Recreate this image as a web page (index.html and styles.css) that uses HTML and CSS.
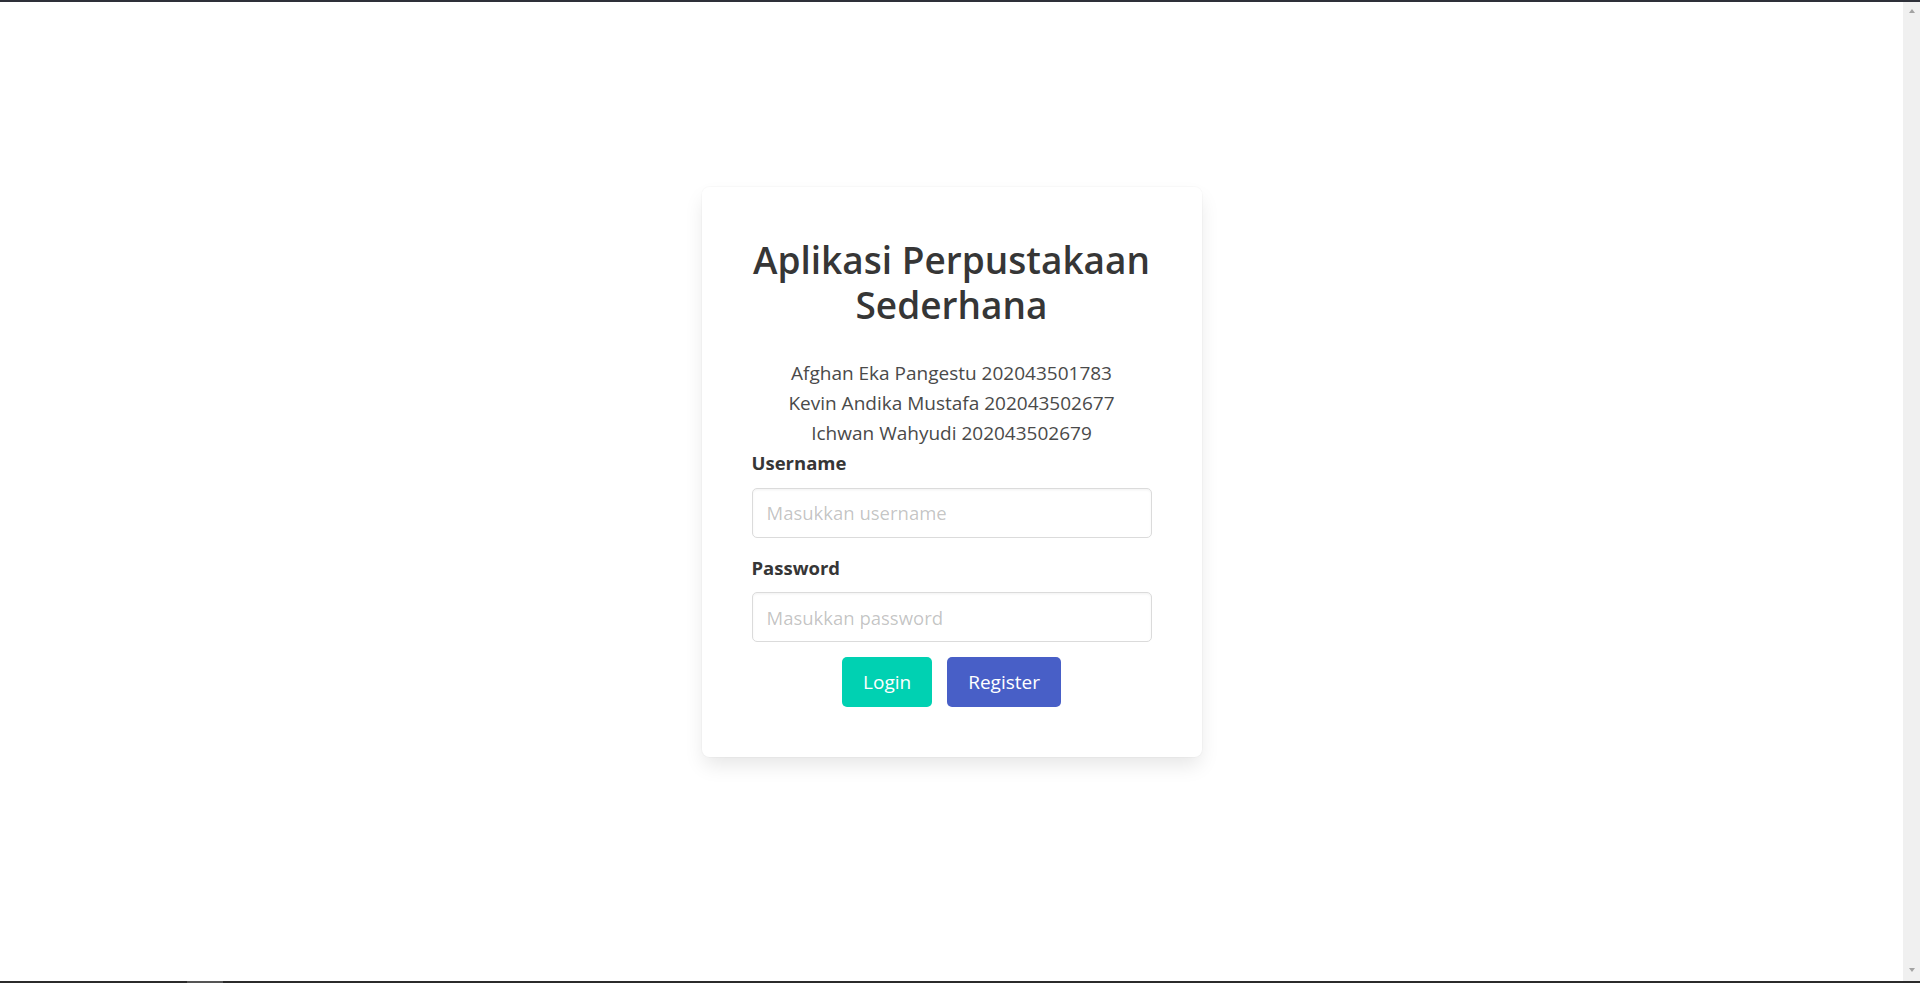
FILE: index.html
```html
<!DOCTYPE html>
<html lang="id">
<head>
<meta charset="utf-8">
<title>Aplikasi Perpustakaan Sederhana</title>
<link rel="stylesheet" href="styles.css">
</head>
<body>
<div class="screen">
  <div class="topbar"></div>
  <div class="viewport">
    <main class="page">
      <div class="box">
        <h1 class="title">Aplikasi Perpustakaan Sederhana</h1>
        <div class="members">
          <p>Afghan Eka Pangestu 202043501783</p>
          <p>Kevin Andika Mustafa 202043502677</p>
          <p>Ichwan Wahyudi 202043502679</p>
        </div>
        <form class="form">
          <div class="field">
            <label class="label" for="username">Username</label>
            <input class="input" id="username" type="text" placeholder="Masukkan username">
          </div>
          <div class="field">
            <label class="label" for="password">Password</label>
            <input class="input" id="password" type="password" placeholder="Masukkan password">
          </div>
          <div class="buttons">
            <button type="button" class="button is-primary">Login</button>
            <button type="button" class="button is-link">Register</button>
          </div>
        </form>
      </div>
    </main>
    <div class="scrollbar">
      <span class="arrow arrow-up"></span>
      <span class="arrow arrow-down"></span>
    </div>
  </div>
  <div class="bottombar"><span class="bottom-thumb"></span></div>
</div>
</body>
</html>
```

FILE: styles.css
```css
* { box-sizing: border-box; }
html, body { margin: 0; padding: 0; }
body {
  font-family: "Open Sans", "Noto Sans", sans-serif;
  color: #4a4a4a;
  background: #ffffff;
  overflow: hidden;
}
.screen {
  width: 1920px;
  height: 983px;
  display: flex;
  flex-direction: column;
}
.topbar {
  height: 2px;
  background: #2e3039;
  flex: none;
}
.bottombar {
  height: 2px;
  background: #2b2b2b;
  flex: none;
  padding-left: 187px;
  display: flex;
}
.bottom-thumb {
  width: 36px;
  height: 2px;
  background: #555555;
}
.viewport {
  flex: 1;
  display: flex;
  min-height: 0;
}
.page {
  flex: 1;
  display: flex;
  justify-content: center;
  align-items: flex-start;
  padding-top: 185px;
}
.scrollbar {
  width: 17px;
  flex: none;
  background: #f0f0f0;
  display: flex;
  flex-direction: column;
  justify-content: space-between;
  align-items: center;
  padding: 7px 0 9px;
}
.arrow {
  width: 0;
  height: 0;
  border-left: 3.5px solid transparent;
  border-right: 3.5px solid transparent;
}
.arrow-up { border-bottom: 4px solid #a3a3a3; }
.arrow-down { border-top: 4px solid #a3a3a3; }

.box {
  width: 500px;
  background: #ffffff;
  border-radius: 7.5px;
  box-shadow: 0 10px 20px -2.5px rgba(10,10,10,0.1), 0 0 0 1px rgba(10,10,10,0.02);
  padding: 50px;
}
.title {
  margin: 0 -20px 31px;
  font-size: 37px;
  font-weight: 600;
  line-height: 45px;
  color: #363636;
  text-align: center;
}
.members {
  text-align: center;
  font-size: 19px;
  line-height: 30px;
}
.members p { margin: 0; }
.form { margin: 0; }
.field { margin-bottom: 15px; display: flex; flex-direction: column; }
.label {
  font-size: 18.5px;
  font-weight: 700;
  line-height: 30px;
  color: #363636;
  margin-bottom: 9.5px;
}
.input {
  height: 50px;
  width: 100%;
  border: 1px solid #dbdbdb;
  border-radius: 5px;
  padding: 0 14px;
  font-family: inherit;
  font-size: 18.5px;
  color: #363636;
  background: #fff;
  box-shadow: inset 0 0.0625em 0.125em rgba(10,10,10,0.05);
  outline: none;
}
.input::placeholder { color: rgba(54,54,54,0.3); }
.buttons {
  display: flex;
  justify-content: center;
  gap: 15px;
}
.button {
  height: 50px;
  border: 1px solid transparent;
  border-radius: 5px;
  padding: 0 20px;
  font-family: inherit;
  font-size: 19px;
  color: #ffffff;
  cursor: pointer;
}
.is-primary { background: #00d1b2; }
.is-link { background: #485fc7; }
```
